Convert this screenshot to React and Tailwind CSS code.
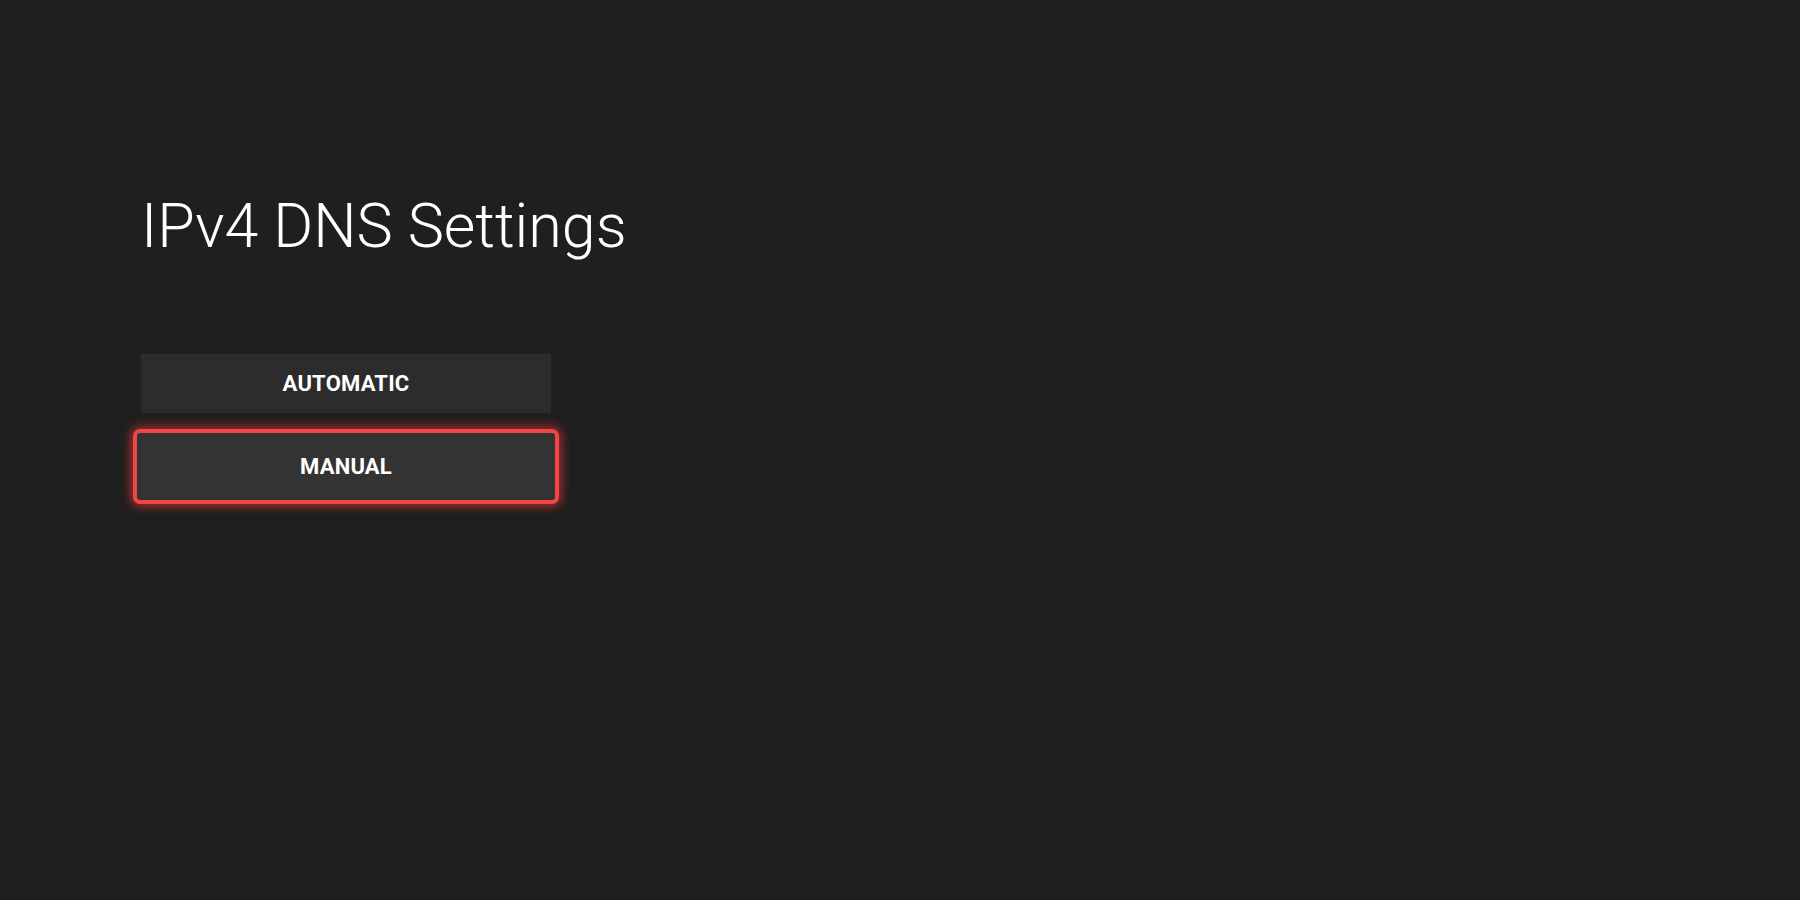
export default function App() {
    return (
        <div className="w-full h-[900px] bg-[#1f1f1f] overflow-hidden font-['Roboto',sans-serif] text-white">
            <div className="flex flex-col pl-[141px] pt-[196px]">
                {/* Title */}
                <h1 className="text-[61px] leading-none font-light">IPv4 DNS Settings</h1>

                {/* Options */}
                <div className="flex flex-col mt-[97px]">
                    <button className="w-[410px] h-[59px] bg-[#2c2c2c] flex items-center justify-center text-[22px] font-bold tracking-[0.2px]">
                        AUTOMATIC
                    </button>
                    <button className="-ml-[8px] mt-[16px] w-[426px] h-[75px] bg-[#333333] border-[4px] border-[#f04646] rounded-[7px] shadow-[0_0_10px_3px_rgba(240,50,50,0.6)] flex items-center justify-center text-[22px] font-bold tracking-[0.2px]">
                        MANUAL
                    </button>
                </div>
            </div>
        </div>
    );
}
